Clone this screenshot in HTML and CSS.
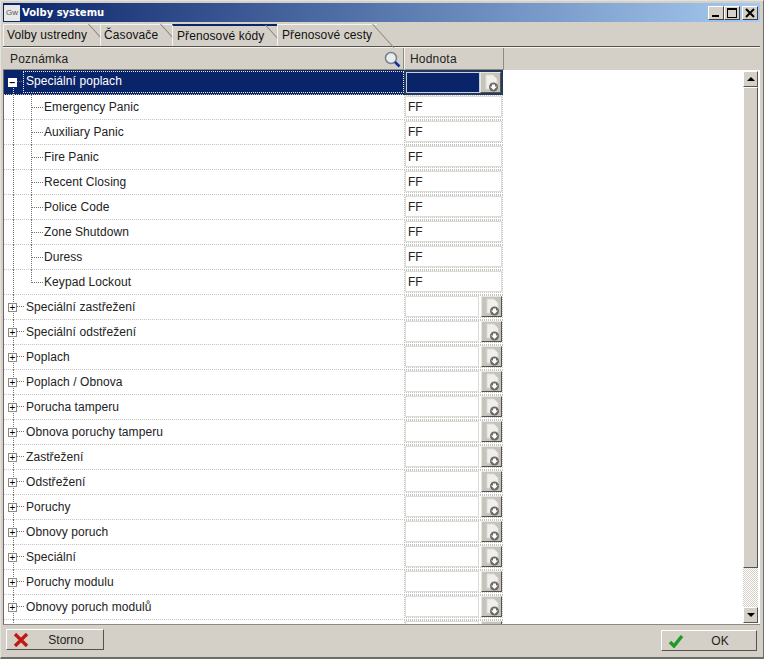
FILE: index.html
```html
<!DOCTYPE html>
<html lang="cs">
<head>
    <meta charset="UTF-8">
    <title>Volby systemu</title>
    <link rel="stylesheet" href="styles.css">
</head>
<body>
    <div class="window">
        <header class="titlebar">
            <span class="app-icon">Gw</span>
            <span class="title">Volby systemu</span>
            <div class="win-buttons">
                <button class="win-btn"><span class="glyph-min"></span></button>
                <button class="win-btn"><span class="glyph-max"></span></button>
                <button class="win-btn">
                    <svg width="10" height="10" viewBox="0 0 10 10"><path d="M1 1L9 9M9 1L1 9" stroke="#000" stroke-width="2"/></svg>
                </button>
            </div>
        </header>

        <nav class="tabs">
            <div class="tab">Volby ustredny</div>
            <div class="tab">Časovače</div>
            <div class="tab active">Přenosové kódy</div>
            <div class="tab">Přenosové cesty</div>
        </nav>

        <main class="panel">
            <div class="grid-head">
                <div class="head-cell head-note">
                    Poznámka
                    <svg class="search-icon" width="17" height="17" viewBox="0 0 17 17">
                        <circle cx="7" cy="7" r="5.5" fill="#e8eef0" stroke="#77808a" stroke-width="1.5"/>
                        <path d="M11 11L15.5 15.5" stroke="#1030a0" stroke-width="2.5"/>
                    </svg>
                </div>
                <div class="head-cell head-value">Hodnota</div>
            </div>

            <div class="grid-body">
                <div class="rows">
                    <div class="row group open selected">
                        <div class="name"><span class="expander">−</span><span class="label">Speciální poplach</span></div>
                        <div class="value"><div class="field"></div><div class="pick"><svg width="18" height="18" viewBox="0 0 18 18"><use href="#doc"/></svg></div></div>
                    </div>
                    <div class="row child"><div class="name"><span class="label">Emergency Panic</span></div><div class="value"><div class="field">FF</div></div></div>
                    <div class="row child"><div class="name"><span class="label">Auxiliary Panic</span></div><div class="value"><div class="field">FF</div></div></div>
                    <div class="row child"><div class="name"><span class="label">Fire Panic</span></div><div class="value"><div class="field">FF</div></div></div>
                    <div class="row child"><div class="name"><span class="label">Recent Closing</span></div><div class="value"><div class="field">FF</div></div></div>
                    <div class="row child"><div class="name"><span class="label">Police Code</span></div><div class="value"><div class="field">FF</div></div></div>
                    <div class="row child"><div class="name"><span class="label">Zone Shutdown</span></div><div class="value"><div class="field">FF</div></div></div>
                    <div class="row child"><div class="name"><span class="label">Duress</span></div><div class="value"><div class="field">FF</div></div></div>
                    <div class="row child last"><div class="name"><span class="label">Keypad Lockout</span></div><div class="value"><div class="field">FF</div></div></div>
                    <div class="row group"><div class="name"><span class="expander">+</span><span class="label">Speciální zastřežení</span></div><div class="value"><div class="field"></div><div class="pick"><svg width="18" height="18" viewBox="0 0 18 18"><use href="#doc"/></svg></div></div></div>
                    <div class="row group"><div class="name"><span class="expander">+</span><span class="label">Speciální odstřežení</span></div><div class="value"><div class="field"></div><div class="pick"><svg width="18" height="18" viewBox="0 0 18 18"><use href="#doc"/></svg></div></div></div>
                    <div class="row group"><div class="name"><span class="expander">+</span><span class="label">Poplach</span></div><div class="value"><div class="field"></div><div class="pick"><svg width="18" height="18" viewBox="0 0 18 18"><use href="#doc"/></svg></div></div></div>
                    <div class="row group"><div class="name"><span class="expander">+</span><span class="label">Poplach / Obnova</span></div><div class="value"><div class="field"></div><div class="pick"><svg width="18" height="18" viewBox="0 0 18 18"><use href="#doc"/></svg></div></div></div>
                    <div class="row group"><div class="name"><span class="expander">+</span><span class="label">Porucha tamperu</span></div><div class="value"><div class="field"></div><div class="pick"><svg width="18" height="18" viewBox="0 0 18 18"><use href="#doc"/></svg></div></div></div>
                    <div class="row group"><div class="name"><span class="expander">+</span><span class="label">Obnova poruchy tamperu</span></div><div class="value"><div class="field"></div><div class="pick"><svg width="18" height="18" viewBox="0 0 18 18"><use href="#doc"/></svg></div></div></div>
                    <div class="row group"><div class="name"><span class="expander">+</span><span class="label">Zastřežení</span></div><div class="value"><div class="field"></div><div class="pick"><svg width="18" height="18" viewBox="0 0 18 18"><use href="#doc"/></svg></div></div></div>
                    <div class="row group"><div class="name"><span class="expander">+</span><span class="label">Odstřežení</span></div><div class="value"><div class="field"></div><div class="pick"><svg width="18" height="18" viewBox="0 0 18 18"><use href="#doc"/></svg></div></div></div>
                    <div class="row group"><div class="name"><span class="expander">+</span><span class="label">Poruchy</span></div><div class="value"><div class="field"></div><div class="pick"><svg width="18" height="18" viewBox="0 0 18 18"><use href="#doc"/></svg></div></div></div>
                    <div class="row group"><div class="name"><span class="expander">+</span><span class="label">Obnovy poruch</span></div><div class="value"><div class="field"></div><div class="pick"><svg width="18" height="18" viewBox="0 0 18 18"><use href="#doc"/></svg></div></div></div>
                    <div class="row group"><div class="name"><span class="expander">+</span><span class="label">Speciální</span></div><div class="value"><div class="field"></div><div class="pick"><svg width="18" height="18" viewBox="0 0 18 18"><use href="#doc"/></svg></div></div></div>
                    <div class="row group"><div class="name"><span class="expander">+</span><span class="label">Poruchy modulu</span></div><div class="value"><div class="field"></div><div class="pick"><svg width="18" height="18" viewBox="0 0 18 18"><use href="#doc"/></svg></div></div></div>
                    <div class="row group"><div class="name"><span class="expander">+</span><span class="label">Obnovy poruch modulů</span></div><div class="value"><div class="field"></div><div class="pick"><svg width="18" height="18" viewBox="0 0 18 18"><use href="#doc"/></svg></div></div></div>
                    <div class="row group"><div class="name"></div><div class="value"><div class="field"></div><div class="pick"></div></div></div>
                </div>

                <div class="scrollbar">
                    <div class="sb-btn"><span class="arrow-up"></span></div>
                    <div class="sb-thumb"></div>
                    <div class="sb-track"></div>
                    <div class="sb-btn"><span class="arrow-down"></span></div>
                </div>
            </div>
        </main>

        <footer class="footer">
            <button class="btn">
                <svg width="16" height="14" viewBox="0 0 16 14"><path d="M2 1L14 13M14 1L2 13" stroke="#c01a12" stroke-width="3.4"/></svg>
                <span class="btn-text">Storno</span>
            </button>
            <button class="btn btn-ok">
                <svg width="16" height="14" viewBox="0 0 16 14"><path d="M2 8L6 12L14 2" fill="none" stroke="#1f9a24" stroke-width="3.4"/></svg>
                <span class="btn-text">OK</span>
            </button>
        </footer>
    </div>

    <svg width="0" height="0" class="defs">
        <symbol id="doc" viewBox="0 0 18 18">
            <path d="M4 1H11L15 5V15H4Z" fill="#f0efec" stroke="#dddbd6"/>
            <circle cx="11.5" cy="13" r="4.5" fill="#6c6a65"/>
            <path d="M10 10.5H13V12.5H15L11.5 16L8 12.5H10Z" fill="#fff"/>
        </symbol>
    </svg>
</body>
</html>
```

FILE: styles.css
```css
* {
    margin: 0;
    padding: 0;
    box-sizing: border-box;
}

body {
    font-family: "Liberation Sans", Arial, sans-serif;
    font-size: 12px;
    color: #000;
    background: #d4d0c8;
    height: 100vh;
    overflow: hidden;
}

.window {
    display: flex;
    flex-direction: column;
    height: 659px;
    padding: 2px 3px 0 2px;
    background: #d4d0c8;
    border-top: 1px solid #e4e2dc;
    border-left: 1px solid #e4e2dc;
    border-right: 1px solid #6e6c68;
    border-bottom: 2px solid #6e6c68;
}

.titlebar {
    display: flex;
    align-items: center;
    height: 19px;
    flex-shrink: 0;
    padding: 0 2px 0 1px;
    background: linear-gradient(90deg, #0a246a 0%, #a6caf0 100%);
    color: #fff;
    font-weight: bold;
    font-size: 11px;
}

.app-icon {
    width: 16px;
    height: 16px;
    margin-right: 2px;
    background: #e8e8e8;
    color: #555;
    font-size: 8px;
    font-weight: normal;
    line-height: 16px;
    text-align: center;
}

.title {
    flex-grow: 1;
    font-family: "DejaVu Sans", sans-serif;
    font-size: 10px;
}

.win-buttons {
    display: flex;
}

.win-btn {
    display: flex;
    align-items: center;
    justify-content: center;
    width: 16px;
    height: 14px;
    background: #d4d0c8;
    border: 1px solid;
    border-color: #fff #404040 #404040 #fff;
}

.win-btn:nth-child(3) {
    margin-left: 2px;
}

.glyph-min {
    display: block;
    width: 7px;
    height: 2px;
    margin-top: 7px;
    margin-right: 2px;
    background: #000;
}

.glyph-max {
    display: block;
    width: 10px;
    height: 10px;
    border: 1px solid #000;
    border-top-width: 2px;
}

.tabs {
    display: flex;
    align-items: flex-end;
    height: 24px;
    flex-shrink: 0;
}

.tab {
    position: relative;
    height: 22px;
    line-height: 20px;
    padding: 0 4px;
    font-size: 12px;
    letter-spacing: 0.1px;
    color: #111;
    border-top: 1px solid #f4f3f0;
    border-left: 1px solid #f4f3f0;
    white-space: nowrap;
}

.tab:nth-child(1) { width: 97px; padding-left: 3px; }
.tab:nth-child(2) { width: 72px; padding-left: 3px; }
.tab:nth-child(3) { width: 105px; }
.tab:nth-child(4) { width: 100px; }

/* slanted right edge of the tab */
.tab::after {
    content: "";
    position: absolute;
    top: -1px;
    right: 11px;
    width: 1px;
    height: 19px;
    background: #8c8a84;
    transform: rotate(-42deg);
    transform-origin: top;
}

.tab:nth-child(4)::after {
    right: 4px;
    height: 32px;
}

.tab.active {
    border-top: 2px solid #0a246a;
}

.panel {
    display: flex;
    flex-direction: column;
    flex-shrink: 0;
    border-top: 1px solid #55534f;
}

.grid-head {
    display: flex;
    height: 23px;
    flex-shrink: 0;
    background: #d4d0c8;
    border-top: 1px solid #f4f3f0;
}

.head-cell {
    position: relative;
    display: flex;
    align-items: center;
    font-size: 12px;
    letter-spacing: 0.2px;
    color: #222;
    border-right: 1px solid #8c8a84;
    border-bottom: 1px solid #8c8a84;
}

.head-note {
    width: 401px;
    padding-left: 7px;
}

.head-value {
    width: 100px;
    padding-left: 5px;
    border-left: 1px solid #f4f3f0;
}

.search-icon {
    position: absolute;
    right: 2px;
    top: 3px;
}

.grid-body {
    display: flex;
    height: 555px;
    flex-shrink: 0;
    overflow: hidden;
    background: #fff;
    border-left: 1px solid #6e6c68;
    border-bottom: 1px solid #8c8a84;
}

.rows {
    position: relative;
    flex-grow: 1;
    overflow: hidden;
}

.row {
    position: relative;
    display: flex;
    height: 25px;
    width: 499px;
    border-bottom: 1px dotted #c4c4c0;
}

.name {
    display: flex;
    align-items: center;
    width: 400px;
    height: 24px;
}

/* tree guide lines */
.row::before {
    content: "";
    position: absolute;
    left: 9px;
    top: 0;
    height: 25px;
    border-left: 1px dotted #77756f;
}

.row.child::after {
    content: "";
    position: absolute;
    left: 27px;
    top: 0;
    width: 11px;
    height: 12px;
    border-left: 1px dotted #77756f;
    border-bottom: 1px dotted #77756f;
}

.row.child:not(.last) .name::after {
    content: "";
    position: absolute;
    left: 27px;
    top: 12px;
    height: 13px;
    border-left: 1px dotted #77756f;
}

.group .name {
    padding-left: 4px;
}

.group .name::after {
    content: "";
    position: absolute;
    left: 13px;
    top: 11px;
    width: 7px;
    border-top: 1px dotted #77756f;
}

.expander {
    position: relative;
    z-index: 1;
    display: block;
    flex-shrink: 0;
    width: 9px;
    height: 9px;
    margin-right: 6px;
    border: 1px solid #8a8a8a;
    background: #fff;
    color: #000;
    font-size: 10px;
    line-height: 7px;
    text-align: center;
}

.label {
    font-size: 12px;
    letter-spacing: 0.07px;
    color: #222;
    padding: 0 3px;
}

.child .name {
    padding-left: 37px;
}

.value {
    display: flex;
    width: 99px;
    height: 23px;
    border: 1px dotted #c4c4c0;
}

.field {
    flex-grow: 1;
    padding-left: 2px;
    line-height: 20px;
    font-size: 12px;
    color: #222;
    border: 1px solid #dedcd7;
}

.pick {
    display: flex;
    align-items: center;
    justify-content: center;
    flex-shrink: 0;
    width: 21px;
    height: 21px;
    margin-left: 2px;
    background: #c6c3bb;
    border: 1px solid;
    border-color: #e8e6e1 #55534f #55534f #e8e6e1;
}

.selected {
    background: #0a246a;
}

.selected::before {
    top: 14px;
    height: 11px;
    border-color: #d8d8d8;
}

.selected .name {
    height: 24px;
    padding-top: 1px;
    padding-bottom: 1px;
}

.selected .label {
    flex-grow: 1;
    align-self: stretch;
    line-height: 20px;
    color: #fff;
    outline: 1px dotted #e8e8e8;
    outline-offset: -1px;
}

.selected .expander {
    background: #fff;
    border-color: #fff;
    font-weight: bold;
}

.selected .value {
    height: 25px;
    background: #fff;
    border: 2px solid #23395e;
}

.selected .field {
    background: #0a246a;
    border: 1px solid #c8d0e0;
}

.selected .pick {
    margin-left: 0;
}

.scrollbar {
    display: flex;
    flex-direction: column;
    width: 15px;
    flex-shrink: 0;
    margin: 1px 2px 1px 0;
}

.sb-btn {
    display: flex;
    align-items: center;
    justify-content: center;
    height: 16px;
    flex-shrink: 0;
    background: #d4d0c8;
    border: 1px solid;
    border-color: #fff #55534f #55534f #fff;
}

.sb-thumb {
    height: 481px;
    background: #d4d0c8;
    border: 1px solid;
    border-color: #fff #55534f #55534f #fff;
}

.sb-track {
    flex-grow: 1;
    background: repeating-conic-gradient(#d4d0c8 0 25%, #fff 0 50%) 0 0 / 2px 2px;
}

.arrow-up {
    border: 4px solid transparent;
    border-top: 0;
    border-bottom: 4px solid #000;
}

.arrow-down {
    border: 4px solid transparent;
    border-bottom: 0;
    border-top: 4px solid #000;
}

.footer {
    display: flex;
    justify-content: space-between;
    align-items: flex-start;
    flex-grow: 1;
    padding: 4px 3px 0 3px;
}

.btn {
    display: flex;
    align-items: center;
    width: 98px;
    height: 21px;
    padding-left: 6px;
    background: #d4d0c8;
    border: 1px solid;
    border-color: #fff #55534f #55534f #fff;
    font-family: "Liberation Sans", Arial, sans-serif;
    font-size: 12px;
    color: #222;
}

.btn-ok {
    width: 96px;
    margin-top: 1px;
}

.btn-text {
    flex-grow: 1;
    text-align: center;
}

.defs {
    position: absolute;
}
```
